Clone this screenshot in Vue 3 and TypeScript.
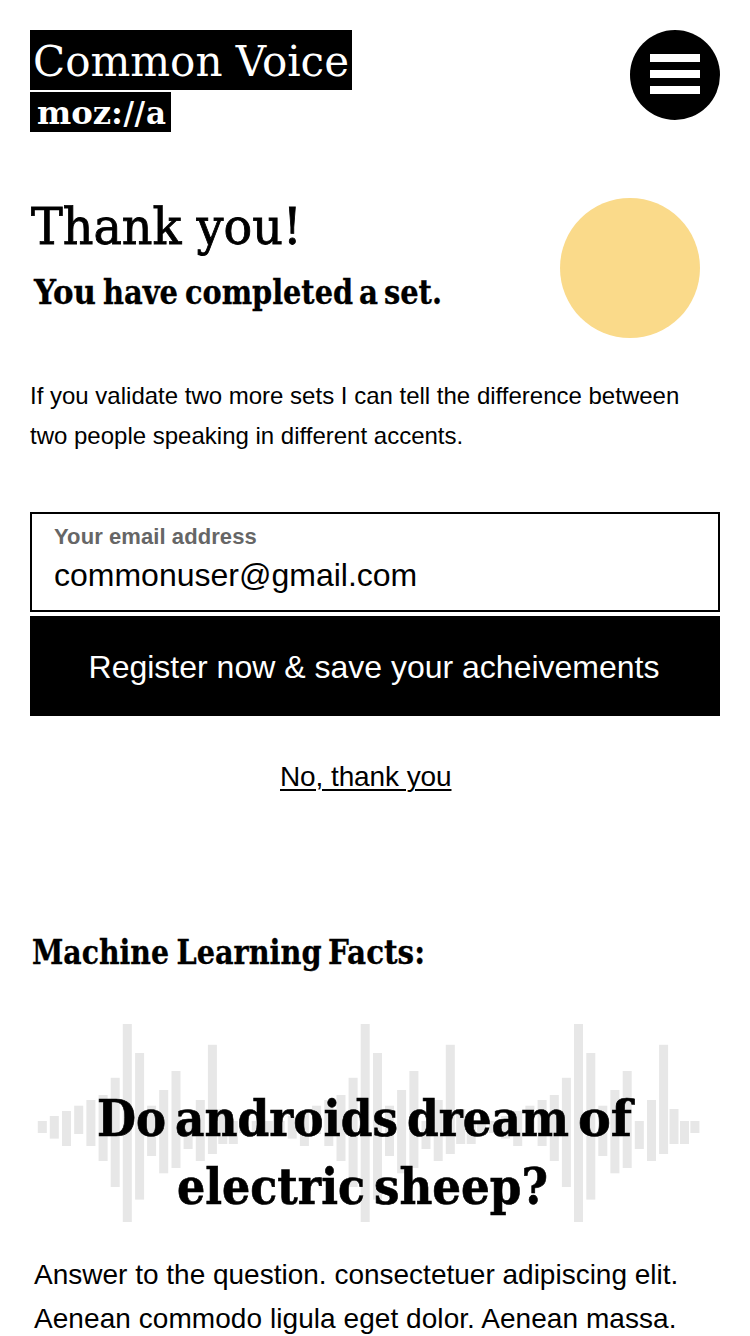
<script setup lang="ts">
import { ref } from 'vue'

interface Bar {
  x: number
  top: number
  bottom: number
}

interface Word {
  text: string
  x: number
  width: number
}

const email = ref('commonuser@gmail.com')

const completed: Word[] = [
  { text: 'You', x: 4, width: 62 },
  { text: 'have', x: 73, width: 75 },
  { text: 'completed', x: 155, width: 168 },
  { text: 'a', x: 329, width: 19 },
  { text: 'set.', x: 354, width: 58 },
]

const factsTitle: Word[] = [
  { text: 'Machine', x: 2, width: 137 },
  { text: 'Learning', x: 146.5, width: 145 },
  { text: 'Facts:', x: 298, width: 97 },
]

const questionFirst: Word[] = [
  { text: 'Do', x: 97, width: 69 },
  { text: 'androids', x: 175, width: 223 },
  { text: 'dream', x: 407, width: 162 },
  { text: 'of', x: 578, width: 54 },
]

const questionSecond: Word[] = [
  { text: 'electric', x: 177, width: 188 },
  { text: 'sheep?', x: 374, width: 174 },
]

// [offset from the tallest bar, top, bottom] within the 198px high waveform
const body: number[][] = [
  [-85, 97, 109], [-73, 92, 114.6], [-60.8, 87, 122], [-48.6, 81.7, 110],
  [-36.4, 76, 122], [-24.2, 71, 137], [-12.1, 53.8, 163], [0, 0, 198],
  [12.3, 29, 175.6], [24.3, 81.7, 132], [36.4, 66, 149.3], [48.7, 47, 144],
  [60.8, 97, 125], [73, 76, 137], [85.1, 20.8, 130], [95.5, 85, 120],
  [106, 97, 120], [116.4, 97, 109],
]
const tail = [[129, 97, 109], [141, 97, 109]]

function wave(peak: number, shape: number[][]): Bar[] {
  return shape.map(([dx, top, bottom]) => ({ x: peak + dx, top, bottom }))
}

const bars: Bar[] = [
  ...wave(122.8, body),
  ...wave(122.8, tail),
  ...wave(360.7, body),
  ...wave(574, body),
]
</script>

<template>
  <main class="page">
    <header class="header">
      <div class="brand">
        <svg class="wordmark" width="322" height="60" viewBox="0 0 322 60">
          <text class="slab" x="3" y="46" font-size="43" textLength="316" lengthAdjust="spacingAndGlyphs">Common Voice</text>
        </svg>
        <svg class="wordmark" width="141" height="40" viewBox="0 0 141 40">
          <text class="slab bold brand-small" y="32" font-size="32">
            <tspan x="7" textLength="86" lengthAdjust="spacingAndGlyphs">moz:</tspan><tspan x="93.5 104.5">//</tspan><tspan x="116" textLength="20" lengthAdjust="spacingAndGlyphs">a</tspan>
          </text>
        </svg>
      </div>
      <button class="menu" aria-label="Menu">
        <span></span><span></span><span></span>
      </button>
    </header>

    <section class="intro">
      <svg class="titles" width="490" height="140" viewBox="0 0 490 140">
        <text class="slab medium" x="1" y="54" font-size="50" textLength="271" lengthAdjust="spacingAndGlyphs">Thank you!</text>
        <text class="slab bold small" y="114">
          <tspan v-for="w in completed" :key="w.text" :x="w.x" :textLength="w.width" lengthAdjust="spacingAndGlyphs">{{ w.text }}</tspan>
        </text>
      </svg>
      <div class="sun"></div>
    </section>

    <p class="message">
      If you validate two more sets I can tell the difference between<br />
      two people speaking in different accents.
    </p>

    <form class="form" @submit.prevent>
      <label class="field">
        <span class="label">Your email address</span>
        <input v-model="email" type="text" />
      </label>
      <button class="register">Register now &amp; save your acheivements</button>
      <a class="skip">No, thank you</a>
    </form>

    <section class="facts">
      <svg width="690" height="50" viewBox="0 0 690 50">
        <text class="slab bold small" y="34">
          <tspan v-for="w in factsTitle" :key="w.text" :x="w.x" :textLength="w.width" lengthAdjust="spacingAndGlyphs">{{ w.text }}</tspan>
        </text>
      </svg>
      <svg class="question" width="750" height="198" viewBox="0 0 750 198">
        <rect v-for="(bar, i) in bars" :key="i" :x="bar.x" :y="bar.top" width="9" :height="bar.bottom - bar.top" fill="#e7e7e7" />
        <text class="slab bold large" y="112">
          <tspan v-for="w in questionFirst" :key="w.text" :x="w.x" :textLength="w.width" lengthAdjust="spacingAndGlyphs">{{ w.text }}</tspan>
        </text>
        <text class="slab bold large" y="180">
          <tspan v-for="w in questionSecond" :key="w.text" :x="w.x" :textLength="w.width" lengthAdjust="spacingAndGlyphs">{{ w.text }}</tspan>
        </text>
      </svg>
      <p class="answer">
        Answer to the question. consectetuer adipiscing elit.<br />
        <span class="second">Aenean commodo ligula eget dolor. Aenean massa.</span>
      </p>
    </section>
  </main>
</template>

<style>
body {
  background: #fff;
  overflow: hidden;
}
</style>

<style scoped>
.page {
  box-sizing: border-box;
  width: 750px;
  height: 1336px;
  padding: 30px 30px 0;
  overflow: hidden;
  color: #000;
  font-family: "Liberation Sans", Arial, sans-serif;
}
svg {
  display: block;
}
.slab {
  font-family: "DejaVu Serif Condensed", "DejaVu Serif", serif;
  fill: currentColor;
}
.bold {
  font-weight: 700;
}
.medium {
  stroke: #000;
  stroke-width: 0.8px;
}
.small {
  font-size: 33px;
  stroke: #000;
  stroke-width: 0.3px;
}
.large {
  font-size: 50px;
  stroke: #000;
  stroke-width: 0.6px;
}
.header {
  display: flex;
  justify-content: space-between;
  align-items: flex-start;
  height: 160px;
}
.brand {
  display: flex;
  flex-direction: column;
  gap: 2px;
}
.wordmark {
  background: #000;
  color: #fff;
}
.menu {
  display: flex;
  flex-direction: column;
  gap: 8px;
  width: 90px;
  height: 90px;
  padding: 24px 20px;
  border: 0;
  border-radius: 50%;
  background: #000;
}
.menu span {
  width: 50px;
  height: 8px;
  background: #fff;
}
.intro {
  display: flex;
  justify-content: space-between;
  height: 186px;
}
.titles {
  overflow: visible;
}
.sun {
  width: 140px;
  height: 140px;
  margin: 8px 20px 0 0;
  border-radius: 50%;
  background: #fada8a;
}
.message {
  margin: 0;
  font-size: 24px;
  line-height: 40px;
  white-space: nowrap;
}
.form {
  display: flex;
  flex-direction: column;
  margin-top: 56px;
}
.field {
  box-sizing: border-box;
  display: flex;
  flex-direction: column;
  height: 100px;
  padding: 10px 22px;
  border: 2px solid #000;
}
.label {
  color: #666;
  font-size: 22px;
  font-weight: 700;
  letter-spacing: 0.08px;
  line-height: 26px;
}
input {
  height: 40px;
  margin-top: 5px;
  padding: 0;
  border: 0;
  outline: 0;
  background: none;
  color: #000;
  font: 32px/40px "Liberation Sans", Arial, sans-serif;
}
.register {
  height: 100px;
  margin-top: 4px;
  padding: 2px 2px 0 0;
  border: 0;
  background: #000;
  color: #fff;
  font: 32px/40px "Liberation Sans", Arial, sans-serif;
}
.skip {
  align-self: flex-start;
  margin: 44px 0 0 250px;
  font-size: 28px;
  letter-spacing: -0.1px;
  line-height: 34px;
  text-decoration: underline;
  text-decoration-thickness: 2px;
  text-underline-offset: 3px;
}
.facts {
  margin-top: 136px;
}
.question {
  margin: 44px 0 0 -30px;
}
.answer {
  margin: 31px 0 0 4px;
  font-size: 28px;
  line-height: 44px;
  white-space: nowrap;
}
.second {
  letter-spacing: 0.06px;
}
</style>
